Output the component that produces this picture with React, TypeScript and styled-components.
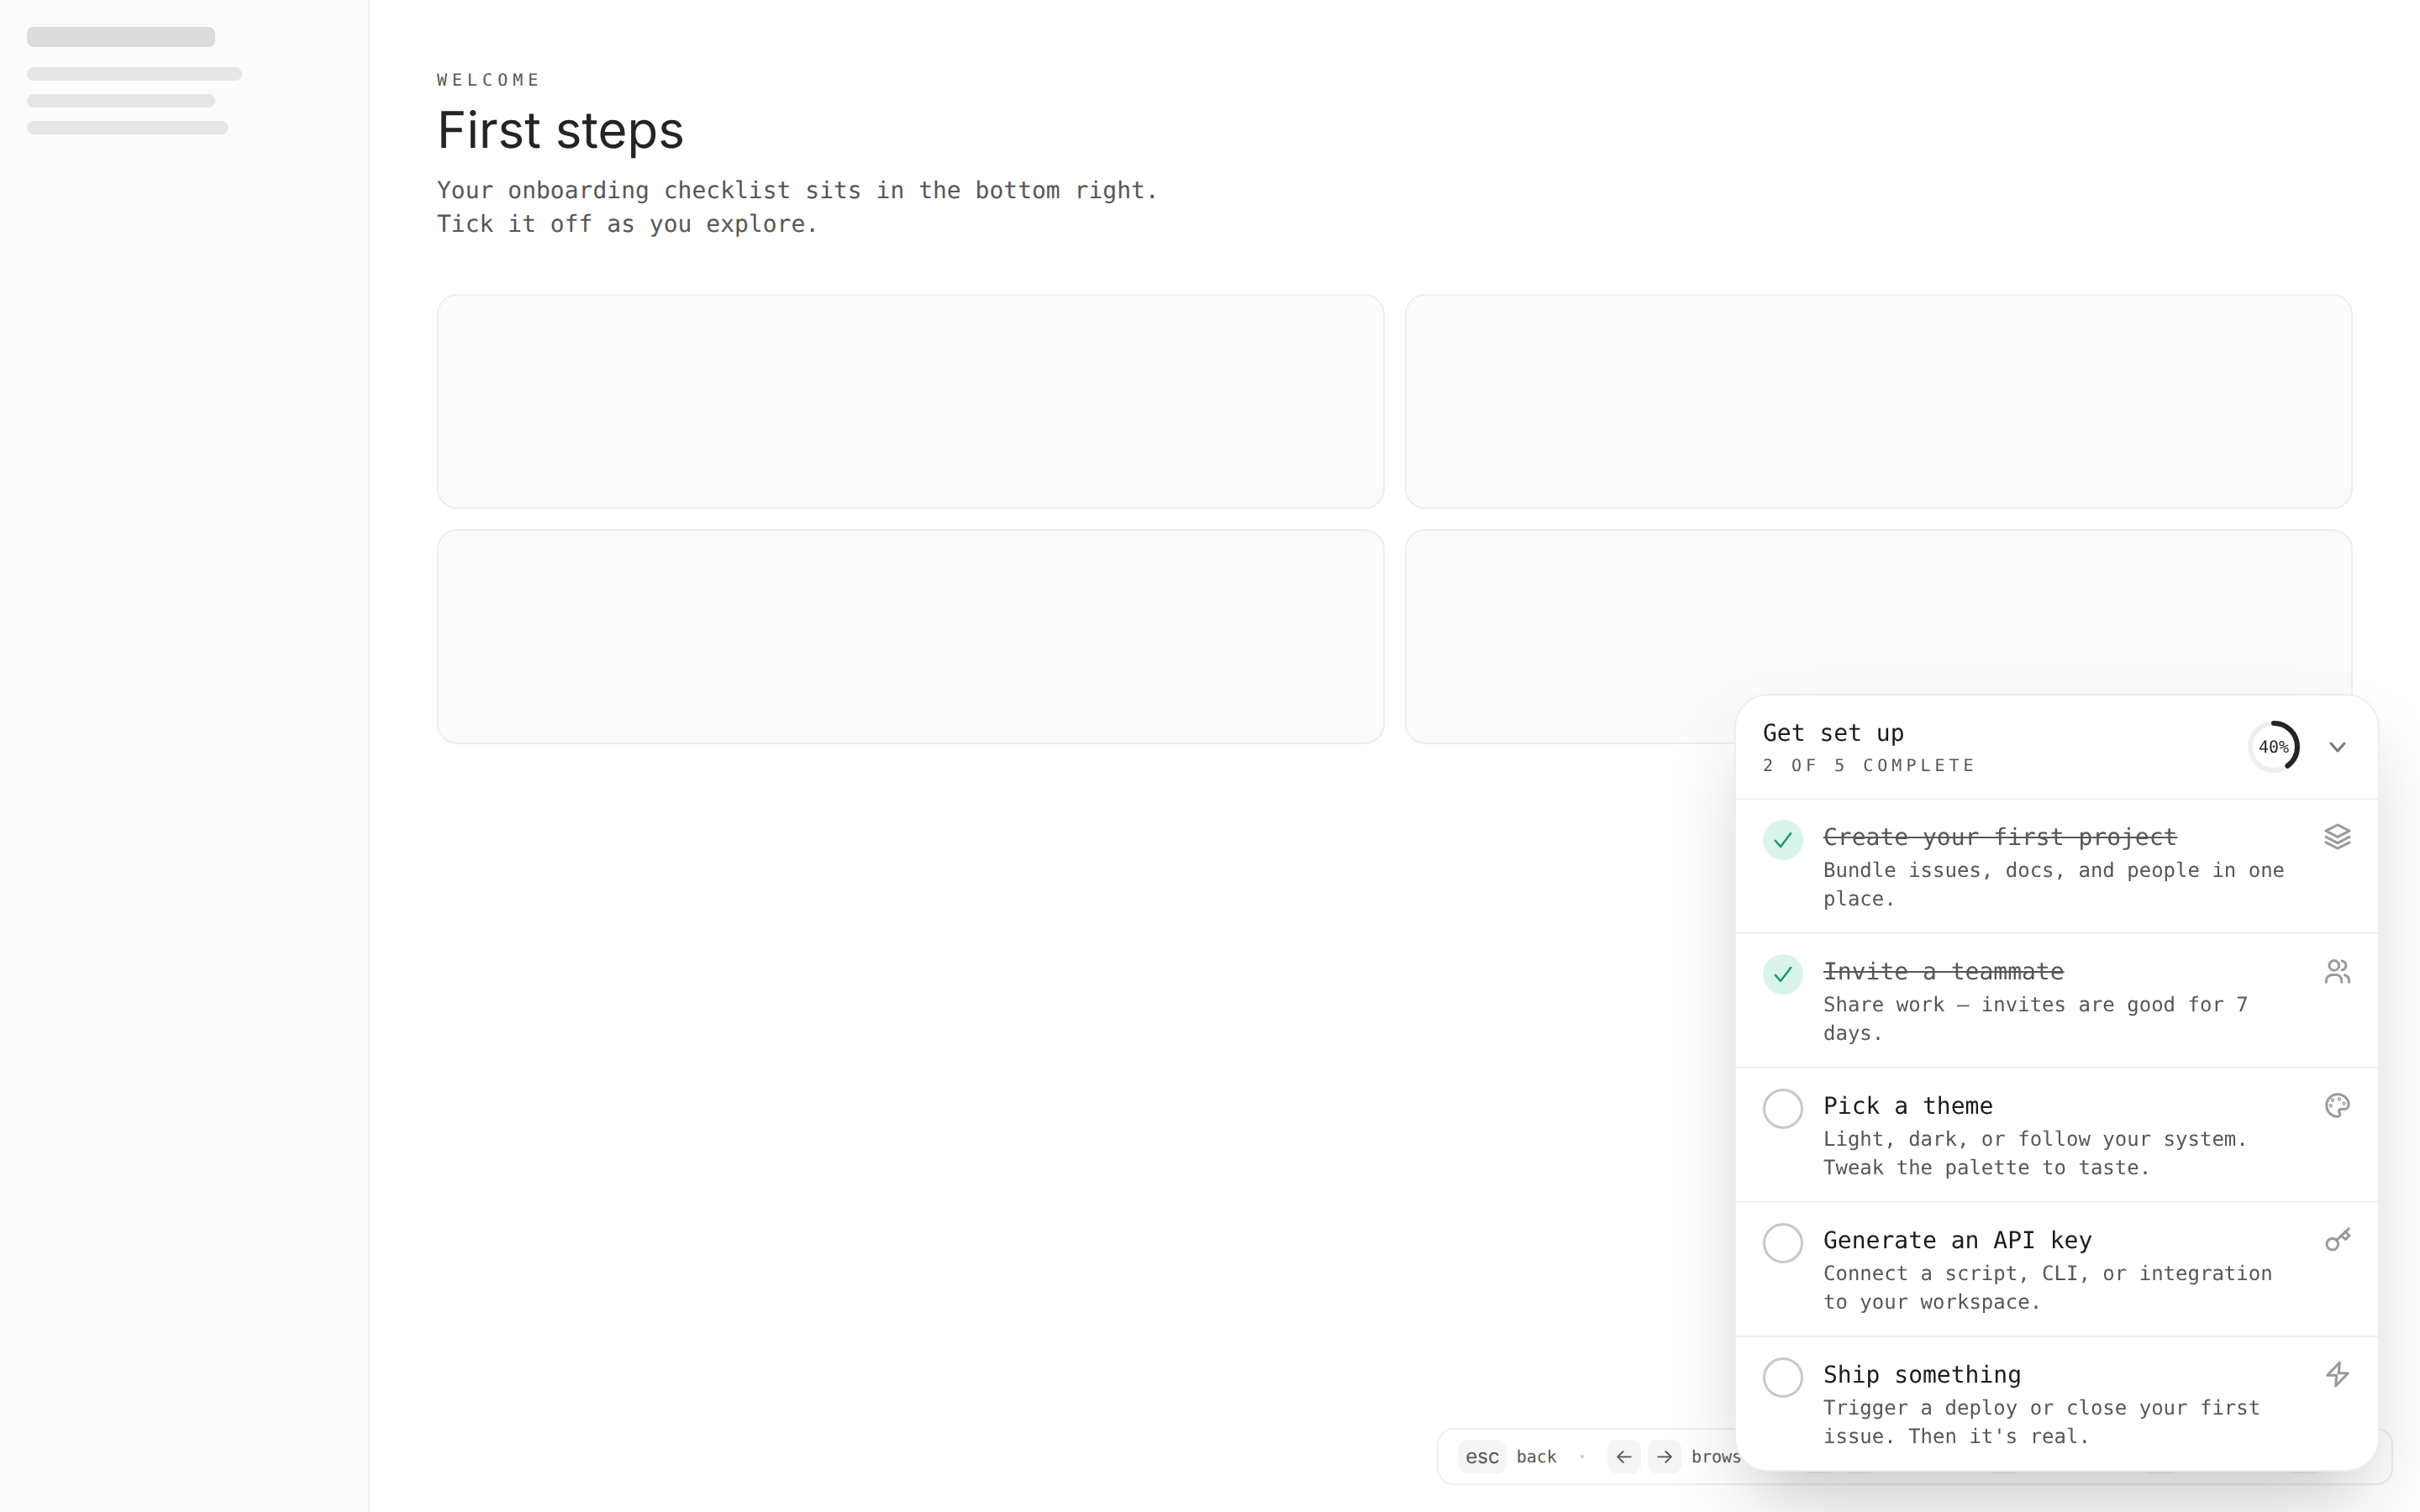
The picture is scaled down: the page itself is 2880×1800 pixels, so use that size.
// App.tsx
import React from 'react';
import styled, { createGlobalStyle } from 'styled-components';

const MONO = '"DejaVu Sans Mono", "Liberation Mono", monospace';

const GlobalStyle = createGlobalStyle`
    html, body {
        margin: 0;
        padding: 0;
        background: #fff;
        text-rendering: geometricPrecision;
    }
    * {
        box-sizing: border-box;
    }
`;

// --- Page ---
// opacity just under 1: keeps the text antialiasing grey, no coloured fringes
const Page = styled.div`
    display: flex;
    min-height: 100vh;
    background: #fff;
    opacity: 0.99;
`;

const Sidebar = styled.aside`
    width: 440px;
    flex-shrink: 0;
    padding: 32px;
    background: #fbfbfb;
    border-right: 2px solid #eee;
    display: flex;
    flex-direction: column;
    gap: 16px;
`;

const SkeletonTitle = styled.div`
    width: 224px;
    height: 24px;
    margin-bottom: 8px;
    border-radius: 8px;
    background: #dcdcdc;
`;

const SkeletonLine = styled.div<{ $w: number }>`
    width: ${(p) => p.$w}px;
    height: 16px;
    border-radius: 8px;
    background: #e6e6e6;
`;

const Main = styled.main`
    flex: 1;
    padding: 81px 80px 0;
`;

const Eyebrow = styled.div`
    font: 400 20px/28px ${MONO};
    letter-spacing: 6px;
    color: #555;
`;

const Heading = styled.h1`
    margin: 10px 0 16px;
    font: 400 60px/72px Inter, sans-serif;
    color: #222;
`;

const Lead = styled.p`
    margin: 0 0 63px;
    font: 400 28px/40px ${MONO};
    color: #555;
`;

const CardGrid = styled.div`
    display: grid;
    grid-template-columns: 1fr 1fr;
    gap: 24px;
`;

const Card = styled.div`
    height: 256px;
    border: 2px solid #eee;
    border-radius: 24px;
    background: #fbfbfb;
`;

// --- Keyboard hints ---
const HintBar = styled.div`
    position: fixed;
    right: 32px;
    bottom: 32px;
    height: 68px;
    padding: 0 24px;
    display: flex;
    align-items: center;
    border: 2px solid #eee;
    border-radius: 20px;
    background: #fff;
    font: 400 20px/1 ${MONO};
    color: #555;
    white-space: nowrap;
`;

const Kbd = styled.kbd`
    min-width: 40px;
    height: 40px;
    padding: 0 8px;
    margin-right: 8px;
    display: inline-flex;
    align-items: center;
    justify-content: center;
    border-radius: 10px;
    background: #f5f5f5;
    font: 400 24px/1 Inter, sans-serif;
    color: #555;
`;

const HintLabel = styled.span`
    margin-left: 4px;
`;

const HintDot = styled.span`
    width: 4px;
    height: 4px;
    margin: 0 28px;
    border-radius: 50%;
    background: #ccc;
`;

// --- Checklist panel ---
const Panel = styled.section`
    position: fixed;
    right: 48px;
    bottom: 48px;
    width: 768px;
    border: 2px solid #eee;
    border-radius: 40px;
    background: #fff;
    overflow: hidden;
    box-shadow: 0 48px 96px -24px rgba(0, 0, 0, 0.25);
`;

const PanelHeader = styled.header`
    height: 122px;
    padding: 0 32px;
    display: flex;
    align-items: center;
`;

const HeaderText = styled.div`
    flex: 1;
`;

const PanelTitle = styled.div`
    font: 400 28px/40px ${MONO};
    color: #1a1a1a;
`;

const PanelSub = styled.div`
    margin-top: 4px;
    font: 400 20px/28px ${MONO};
    letter-spacing: 5px;
    color: #555;
`;

const Ring = styled.div`
    position: relative;
    width: 64px;
    height: 64px;
    margin-right: 28px;
    display: flex;
    align-items: center;
    justify-content: center;
`;

const RingSvg = styled.svg`
    position: absolute;
    inset: 0;
`;

const RingLabel = styled.span`
    position: relative;
    font: 400 20px/1 ${MONO};
    color: #222;
`;

const HeaderChevron = styled.svg`
    width: 32px;
    height: 32px;
    fill: none;
    stroke: #777;
    stroke-width: 1.5;
    stroke-linecap: round;
    stroke-linejoin: round;
`;

const Row = styled.div`
    height: 160px;
    padding: 24px 32px 0;
    display: flex;
    gap: 24px;
    border-top: 2px solid #f0f0f0;
`;

const CheckCircle = styled.div<{ $done: boolean }>`
    width: 48px;
    height: 48px;
    flex-shrink: 0;
    display: flex;
    align-items: center;
    justify-content: center;
    border-radius: 50%;
    border: ${(p) => (p.$done ? 'none' : '3px solid #c8c8c8')};
    background: ${(p) => (p.$done ? '#d9f4e9' : '#fff')};
`;

const CheckMark = styled.svg`
    width: 28px;
    height: 28px;
    fill: none;
    stroke: #0f9d6e;
    stroke-width: 1.25;
    stroke-linecap: round;
    stroke-linejoin: round;
`;

const RowText = styled.div`
    flex: 1;
    min-width: 0;
`;

const RowTitle = styled.div<{ $done: boolean }>`
    margin-top: 1px;
    font: 400 28px/40px ${MONO};
    color: ${(p) => (p.$done ? '#555' : '#1a1a1a')};
    text-decoration: ${(p) => (p.$done ? 'line-through' : 'none')};
`;

const RowDesc = styled.div`
    margin-top: 2px;
    font: 400 24px/34.4px ${MONO};
    color: #555;
`;

const RowIcon = styled.svg`
    width: 32px;
    height: 32px;
    margin-top: 4px;
    flex-shrink: 0;
    fill: none;
    stroke: #999;
    stroke-width: 1.5;
    stroke-linecap: round;
    stroke-linejoin: round;
`;

// --- Dados ---
const icons: Record<string, React.ReactNode> = {
    layers: (
        <>
            <path d="M8 1 15 4.6 8 8.2 1 4.6z" />
            <path d="M1 8.2 8 11.8 15 8.2" />
            <path d="M1 11.4 8 15 15 11.4" />
        </>
    ),
    users: (
        <>
            <circle cx="5.9" cy="4.7" r="2.9" />
            <path d="M1.2 14.6v-.8c0-2.2 1.8-3.6 3.8-3.6h1.8c2 0 3.6 1.4 3.6 3.6v.8" />
            <path d="M10.6 2c1.3.3 2.3 1.4 2.3 2.7s-1 2.4-2.3 2.7" />
            <path d="M12.2 10.4c1.5.4 2.6 1.7 2.6 3.4v.8" />
        </>
    ),
    palette: (
        <>
            <path d="M8 1.4a6.6 6.6 0 1 0 0 13.2c.9 0 1.4-.6 1.4-1.3 0-.8-.6-1.1-.6-1.8 0-.7.6-1.2 1.3-1.2h1.7a2.8 2.8 0 0 0 2.8-2.8C14.6 4.1 11.6 1.4 8 1.4z" />
            <circle cx="5" cy="4.9" r=".35" />
            <circle cx="9" cy="4.2" r=".35" />
            <circle cx="11.8" cy="6.7" r=".35" />
            <circle cx="3.9" cy="8.1" r=".35" />
        </>
    ),
    key: (
        <>
            <circle cx="4.9" cy="10.6" r="3.4" />
            <path d="M7.4 8.2 14.6 1.4" />
            <path d="M10 5.4 12.7 7.7 15 5.4 12.4 3.2" />
        </>
    ),
    zap: <path d="M9.2 1 1.8 8.6H7.4L6.8 15 14.2 7.4H8.6z" />,
};

const steps = [
    { title: 'Create your first project', desc: 'Bundle issues, docs, and people in one place.', icon: 'layers', done: true },
    { title: 'Invite a teammate', desc: 'Share work — invites are good for 7 days.', icon: 'users', done: true },
    { title: 'Pick a theme', desc: 'Light, dark, or follow your system. Tweak the palette to taste.', icon: 'palette', done: false },
    { title: 'Generate an API key', desc: 'Connect a script, CLI, or integration to your workspace.', icon: 'key', done: false },
    { title: 'Ship something', desc: "Trigger a deploy or close your first issue. Then it's real.", icon: 'zap', done: false },
];

const hints = [
    { keys: ['esc'], label: 'back' },
    { keys: ['←', '→'], label: 'browse' },
    { keys: ['↑', '↓'], label: 'steps' },
    { keys: ['x'], label: 'toggle' },
    { keys: ['s'], label: 'share' },
    { keys: ['?'], label: 'help' },
];

const RING_R = 28;
const RING_C = 2 * Math.PI * RING_R;

export default function App() {
    const progress = 0.4;

    return (
        <Page>
            <GlobalStyle />
            <Sidebar>
                <SkeletonTitle />
                <SkeletonLine $w={256} />
                <SkeletonLine $w={224} />
                <SkeletonLine $w={240} />
            </Sidebar>

            <Main>
                <Eyebrow>WELCOME</Eyebrow>
                <Heading>First steps</Heading>
                <Lead>
                    Your onboarding checklist sits in the bottom right.
                    <br />
                    Tick it off as you explore.
                </Lead>
                <CardGrid>
                    <Card />
                    <Card />
                    <Card />
                    <Card />
                </CardGrid>
            </Main>

            <HintBar>
                {hints.map((hint, index) => (
                    <React.Fragment key={hint.label}>
                        {index > 0 && <HintDot />}
                        {hint.keys.map((k) => (
                            <Kbd key={k}>{k}</Kbd>
                        ))}
                        <HintLabel>{hint.label}</HintLabel>
                    </React.Fragment>
                ))}
            </HintBar>

            <Panel>
                <PanelHeader>
                    <HeaderText>
                        <PanelTitle>Get set up</PanelTitle>
                        <PanelSub>2 OF 5 COMPLETE</PanelSub>
                    </HeaderText>
                    <Ring>
                        <RingSvg width="64" height="64" viewBox="0 0 64 64" fill="none" strokeWidth="6">
                            <circle cx="32" cy="32" r={RING_R} stroke="#eee" />
                            <circle
                                cx="32"
                                cy="32"
                                r={RING_R}
                                stroke="#222"
                                strokeLinecap="round"
                                strokeDasharray={`${RING_C * progress} ${RING_C}`}
                                transform="rotate(-90 32 32)"
                            />
                        </RingSvg>
                        <RingLabel>40%</RingLabel>
                    </Ring>
                    <HeaderChevron viewBox="0 0 16 16">
                        <path d="M4 6 8 10.5 12 6" />
                    </HeaderChevron>
                </PanelHeader>

                {steps.map((step) => (
                    <Row key={step.title}>
                        <CheckCircle $done={step.done}>
                            {step.done && (
                                <CheckMark viewBox="0 0 14 14">
                                    <path d="M2.4 7.4 5.5 11 11.6 3" />
                                </CheckMark>
                            )}
                        </CheckCircle>
                        <RowText>
                            <RowTitle $done={step.done}>{step.title}</RowTitle>
                            <RowDesc>{step.desc}</RowDesc>
                        </RowText>
                        <RowIcon viewBox="0 0 16 16">{icons[step.icon]}</RowIcon>
                    </Row>
                ))}
            </Panel>
        </Page>
    );
}
